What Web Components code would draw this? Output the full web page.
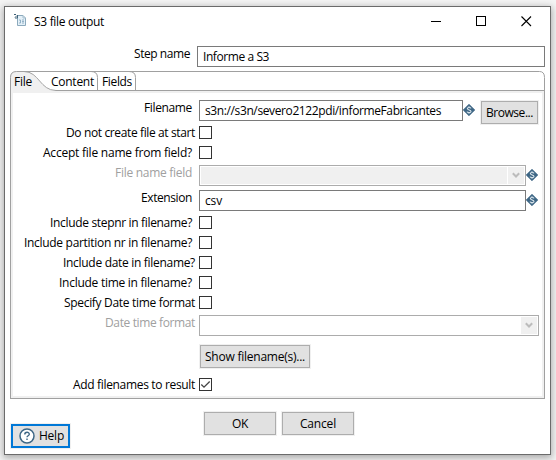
<!DOCTYPE html>
<html lang="en">
<head>
<meta charset="utf-8">
<title>S3 file output</title>
<style>
html,body{margin:0;height:100%;overflow:hidden}
body{background:#f4f4f4;font:12px/16px "Open Sans","Noto Sans",sans-serif;color:#000;padding:6px 5px 5px 4px;box-sizing:border-box}
</style>
</head>
<body>
<s3-dialog></s3-dialog>
<script>
const define = (name, html, init) => {
  const t = document.createElement('template');
  t.innerHTML = html;
  customElements.define(name, class extends HTMLElement {
    connectedCallback() {
      if (this.shadowRoot) return;
      this.attachShadow({mode: 'open'}).append(t.content.cloneNode(true));
      if (init) init(this, this.shadowRoot);
    }
  });
};

/* Text run whose tracking is adjusted to occupy the width in "w". */
define('fit-text', `<style>:host{display:inline-block;white-space:pre;line-height:16px;height:16px;flex:none}span{display:inline-block}</style><span><slot></slot></span>`, (el, root) => {
  const s = root.querySelector('span'), w = +el.getAttribute('w');
  s.style.letterSpacing = '0';
  const gap = (w - s.getBoundingClientRect().width) / el.textContent.length;
  s.style.letterSpacing = gap.toFixed(3) + 'px';
  el.style.width = w + 'px';
});

define('title-bar', `<style>
:host{display:flex;height:39px;box-sizing:border-box;padding:7px 18px 0 9px;align-items:flex-start}
.t{margin:-1px auto 0 7px;padding-top:1px;color:#000}
svg{flex:none;display:block}
.c{margin-top:2px;display:flex;gap:35px}
</style>
<svg width="13" height="13" viewBox="0 0 13 13"><path d="M3.5 1.5H9L11.5 4v7.5h-8z" fill="#e4f0f8" stroke="#8ba9bc"/><path d="M0 .5h2M1 3.5l2-2M3.5 1v3H1" fill="none" stroke="#3f6278"/><path d="M9 1.5V4h2.500" fill="none" stroke="#a9c1d0"/><path d="M5 6h1.500v3H5M8 6h2M8 7.500h2M8 9h2" fill="none" stroke="#7da2ba" stroke-width=".8"/></svg>
<fit-text class="t" w="70">S3 file output</fit-text>
<div class="c">
<svg width="10" height="11"><path d="M0 5.500h10" stroke="#000"/></svg>
<svg width="10" height="10"><rect x=".5" y=".5" width="9" height="9" fill="none" stroke="#000"/></svg>
<svg width="11" height="11"><path d="M.5.5l9.500 9.500M10 .5L.5 10" stroke="#000" stroke-width="1.100"/></svg>
</div>`);

define('text-field', `<style>:host{display:block;box-sizing:border-box;height:21px;border:1px solid #7a7a7a;background:#fff;padding:2px 0 0 5px;flex:none}</style><slot></slot>`);

define('push-button', `<style>
:host{display:flex;box-sizing:border-box;height:23px;border:1px solid #adadad;background:#e1e1e1;box-shadow:0 0 0 1px #f0f0f0;align-items:center;justify-content:center;flex:none;padding-top:1px}
:host([focused]){border:2px solid #0078d7;height:24px;justify-content:flex-start;padding:0 0 0 6px;gap:4px}
</style><slot></slot>`);

define('var-mark', `<style>:host{display:block;width:12px;height:12px;flex:none}svg{display:block}</style>
<svg width="12" height="12" viewBox="0 0 12 12"><path d="M6 .2L11.800 6 6 11.800.2 6z" fill="#3d6685" stroke="#3d6685" stroke-width=".7"/><path d="M8 4.300C7.700 3.300 4.300 3.100 4.300 4.600S8 5.900 8 7.400 4.400 8.900 4 7.700M6 2.300v1M6 8.700v1" fill="none" stroke="#dde7ed" stroke-width="1.100"/></svg>`);

define('check-box', `<style>:host{display:block;width:13px;height:13px;flex:none}svg{display:block}path{display:none}:host([checked]) path{display:block}</style>
<svg width="13" height="13"><rect x=".5" y=".5" width="12" height="12" fill="#fff" stroke="#333"/><path d="M2.300 6.500L5 9.200 10.700 3.500" fill="none" stroke="#444" stroke-width="1.300"/></svg>`);

define('combo-box', `<style>
:host{display:flex;box-sizing:border-box;height:21px;border:1px solid #acacac;background:#fff;padding:1px;flex:none}
.f{flex:1;background:#fff}:host([readonly]) .f{background:#f0f0f0}
.a{width:16px;background:#f0f0f0;margin-left:1px;display:flex;align-items:center;justify-content:center}
</style><div class="f"></div><div class="a"><svg width="8" height="7"><path d="M.8 1.300L4 4.500 7.200 1.300" fill="none" stroke="#bcbcbc" stroke-width="2"/></svg></div>`);

/* A label right-aligned before its control; --h row height, --e label inset, --y label shift. */
define('form-row', `<style>
:host{display:flex;height:var(--h,20px);align-items:flex-start;flex:none}
.l{width:var(--lw,186px);box-sizing:border-box;padding-right:var(--e,7px);text-align:right;flex:none;margin-top:var(--y,-1px)}
:host([disabled]) .l{color:#a0a0a0}
</style><div class="l"><slot name="label"></slot></div><slot></slot>`);

define('tab-strip', `<style>
:host{display:block;height:20px;position:relative;flex:none}
svg{display:block}
.n{position:absolute;left:4px;top:3px;display:flex}
</style>
<svg width="535" height="20"><path d="M0 20V6Q0 0 6 0H14C26 0 31 20 46 20z" fill="#f0f0f0"/><path d="M.5 20V6.500Q.5 .5 6.500 .5H529.500Q534.500 .5 534.500 6.500V20M14 .5C29 .5 30 19.500 46 19.500H535M81 .5Q87.500 .5 87.500 6.500V19M119 .5Q125.500 .5 125.500 6.500V19" fill="none" stroke="#a0a0a0"/></svg>
<div class="n"><slot></slot></div>`);

define('tab-pane', `<style>
:host{display:flex;flex-direction:column;height:308px;box-sizing:border-box;border:1px solid #a0a0a0;border-top:0;background:#fff;box-shadow:inset 0 0 0 2px #f0f0f0;padding:9px 0 0 2px;flex:none}
</style><slot></slot>`);

define('s3-dialog', `<style>
:host{display:flex;flex-direction:column;width:547px;height:449px;box-sizing:border-box;border:1px solid #6b6b6b;background:#fff;box-shadow:0 2px 7px 1px rgba(0,0,0,.3)}
.tabs{margin:0 0 0 5px;width:535px;height:328px}
.foot{display:flex;padding:13px 0 0 6px;align-items:flex-start}
</style>
<title-bar></title-bar>
<form-row style="--h:25px;--lw:192px;--e:7px;--y:0px"><fit-text slot="label" w="56">Step name</fit-text><text-field style="width:348px"><fit-text w="66">Informe a S3</fit-text></text-field></form-row>
<div class="tabs">
<tab-strip><fit-text w="18">File</fit-text><fit-text w="43" style="margin-left:19px">Content</fit-text><fit-text w="30" style="margin-left:8px">Fields</fit-text></tab-strip>
<tab-pane>
<form-row style="--h:26px;--y:0px"><fit-text slot="label" w="48">Filename</fit-text><text-field style="width:264px"><fit-text w="236">s3n://s3n/severo2122pdi/informeFabricantes</fit-text></text-field><var-mark style="margin-top:4px"></var-mark><push-button style="width:57px;margin:1px 0 0 6px"><fit-text w="47">Browse...</fit-text></push-button></form-row>
<form-row style="--e:4px"><fit-text slot="label" w="129">Do not create file at start</fit-text><check-box></check-box></form-row>
<form-row style="--h:19px"><fit-text slot="label" w="149">Accept file name from field?</fit-text><check-box></check-box></form-row>
<form-row disabled style="--h:25px;--y:0px"><fit-text slot="label" w="77">File name field</fit-text><combo-box readonly style="width:327px"></combo-box><var-mark style="margin-top:4px"></var-mark></form-row>
<form-row style="--h:26px;--y:0px"><fit-text slot="label" w="51">Extension</fit-text><text-field style="width:327px"><fit-text w="17">csv</fit-text></text-field><var-mark style="margin-top:4px"></var-mark></form-row>
<form-row><fit-text slot="label" w="142">Include stepnr in filename?</fit-text><check-box></check-box></form-row>
<form-row><fit-text slot="label" w="168">Include partition nr in filename?</fit-text><check-box></check-box></form-row>
<form-row style="--e:4px"><fit-text slot="label" w="132">Include date in filename?</fit-text><check-box></check-box></form-row>
<form-row><fit-text slot="label" w="133">Include time in filename?</fit-text><check-box></check-box></form-row>
<form-row style="--h:19px;--e:4px"><fit-text slot="label" w="131">Specify Date time format</fit-text><check-box></check-box></form-row>
<form-row disabled style="--h:30px;--e:4px;--y:0px"><fit-text slot="label" w="90">Date time format</fit-text><combo-box style="width:340px"></combo-box></form-row>
<form-row style="--h:33px;--lw:187px"><push-button style="width:110px"><fit-text w="100">Show filename(s)...</fit-text></push-button></form-row>
<form-row style="--e:4px"><fit-text slot="label" w="122">Add filenames to result</fit-text><check-box checked></check-box></form-row>
</tab-pane>
</div>
<div class="foot">
<push-button focused style="width:59px;margin-top:12px"><svg width="16" height="16" viewBox="0 0 16 16"><circle cx="8" cy="8" r="7" fill="#fff" stroke="#3d6685" stroke-width="1.500"/><path d="M5.800 6.400C5.800 3.500 10.300 3.600 10.300 6.200 10.300 7.800 8 7.700 8 9.300M8 10.500V12" fill="none" stroke="#3d6685" stroke-width="1.400"/></svg><fit-text w="25">Help</fit-text></push-button>
<push-button style="width:72px;margin-left:134px"><fit-text w="16">OK</fit-text></push-button>
<push-button style="width:72px;margin-left:6px"><fit-text w="36">Cancel</fit-text></push-button>
</div>`);
</script>
</body>
</html>
